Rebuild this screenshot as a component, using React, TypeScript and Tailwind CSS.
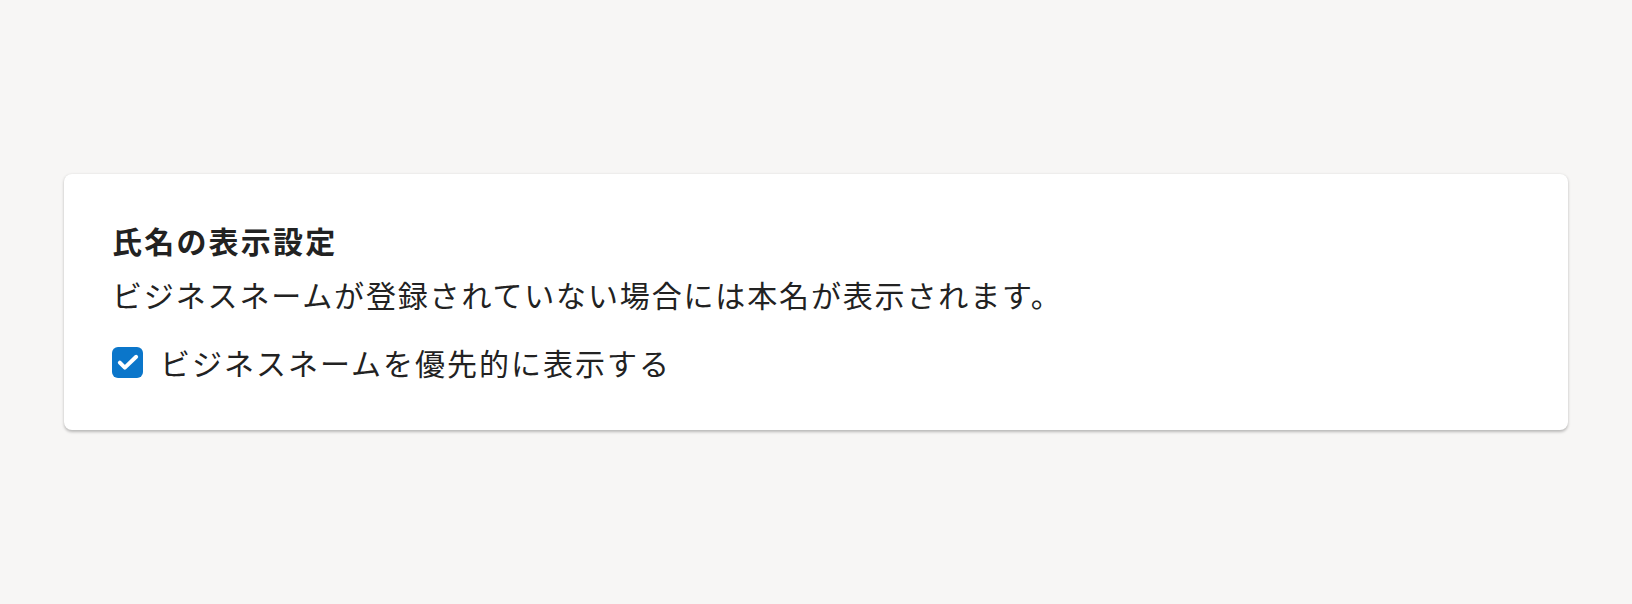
import { useState } from 'react';

const font = {
  fontFamily: '"Noto Sans CJK JP", "Noto Sans", sans-serif',
};

export default function App() {
  const [preferBusinessName, setPreferBusinessName] = useState(true);

  return (
    <div className="min-h-[604px] bg-[#f7f6f5] px-16 pt-[174px]" style={font}>
      <section className="rounded-lg bg-white px-12 pb-[48px] pt-[46px] text-[#222222] shadow-[0_1.5px_3px_rgba(0,0,0,0.25)]">
        <h2 className="text-[30px] font-bold leading-[40px] tracking-[2.2px]">氏名の表示設定</h2>
        <p className="mt-[14px] text-[30px] leading-[40px] tracking-[1.85px]">
          ビジネスネームが登録されていない場合には本名が表示されます。
        </p>

        {/* Checkbox row */}
        <label className="mt-[28px] flex h-[40px] cursor-pointer items-center gap-[17px]">
          <input
            type="checkbox"
            className="sr-only"
            checked={preferBusinessName}
            onChange={() => setPreferBusinessName(!preferBusinessName)}
          />
          <span
            className={`flex h-[31px] w-[31px] shrink-0 items-center justify-center rounded-[6px] ${
              preferBusinessName ? 'bg-[#0b76ca]' : 'border-2 border-gray-400 bg-white'
            }`}
          >
            {preferBusinessName && (
              <svg width="28" height="28" viewBox="0 0 24 24" fill="none">
                <path
                  d="M5 12.5l4.3 4.3L19 7.5"
                  stroke="white"
                  strokeWidth="3.4"
                  strokeLinecap="round"
                  strokeLinejoin="round"
                />
              </svg>
            )}
          </span>
          <span className="text-[30px] leading-[40px] tracking-[2px]">ビジネスネームを優先的に表示する</span>
        </label>
      </section>
    </div>
  );
}
